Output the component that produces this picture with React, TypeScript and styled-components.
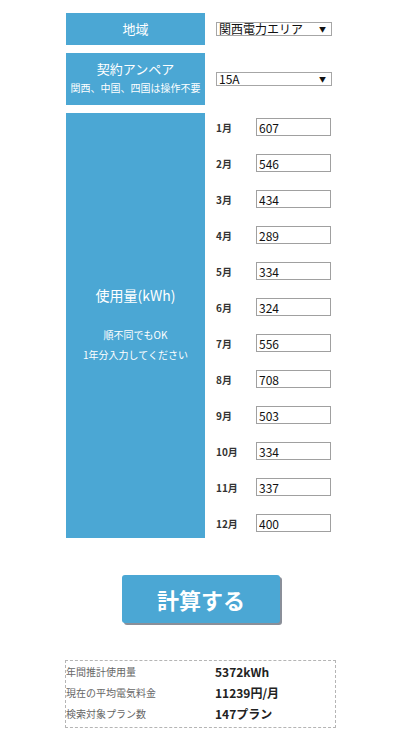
import React from 'react';
import styled, { createGlobalStyle } from 'styled-components';

const GlobalStyle = createGlobalStyle`
  html, body {
    margin: 0;
    padding: 0;
    background: #fff;
    font-family: "Noto Sans CJK JP", "Noto Sans", sans-serif;
    color: #222;
  }
`;

const months = [607, 546, 434, 289, 334, 324, 556, 708, 503, 334, 337, 400];

const Page = styled.div`
  width: 271px;
  margin: 0 0 0 65px;
  padding: 13px 0 11px;
`;

const FormGrid = styled.div`
  display: grid;
  grid-template-columns: 139px 1fr;
  column-gap: 11px;
  row-gap: 8px;
  padding-left: 1px;
`;

const Label = styled.div<{ $h?: number }>`
  background: #4ba7d4;
  color: #fff;
  display: flex;
  flex-direction: column;
  align-items: center;
  justify-content: center;
  text-align: center;
  min-height: ${(p) => p.$h ?? 0}px;
`;

const LabelTitle = styled.div<{ $size: number }>`
  font-size: ${(p) => p.$size}px;
  line-height: 1.4;
`;

const LabelNote = styled.div`
  font-size: 10px;
  line-height: 20px;
`;

const Field = styled.div`
  display: flex;
  align-items: center;
`;

const SelectBox = styled.div`
  position: relative;
  width: 116px;
  height: 14px;
  border: 1px solid #a6a6a6;
  box-sizing: border-box;
  background: #fff;
  font-size: 12px;
  line-height: 12px;
  padding-left: 2px;
  color: #111;
  display: flex;
  align-items: center;
`;

const Arrow = styled.span`
  position: absolute;
  right: 5px;
  top: 2px;
  font-size: 7px;
  line-height: 9px;
  color: #111;
`;

const MonthList = styled.div`
  display: flex;
  flex-direction: column;
  gap: 18px;
  padding: 5px 0 6px;
`;

const MonthRow = styled.div`
  display: flex;
  align-items: center;
  height: 18px;
`;

const MonthName = styled.span`
  width: 40px;
  font-size: 10px;
  font-weight: bold;
  color: #333;
`;

const NumInput = styled.input`
  width: 75px;
  height: 18px;
  box-sizing: border-box;
  border: 1px solid #a0a0a0;
  padding: 0 2px;
  font-family: "Noto Sans CJK JP", "Noto Sans", sans-serif;
  font-size: 12px;
  color: #111;
  outline: none;
`;

const ButtonRow = styled.div`
  display: flex;
  justify-content: center;
  padding: 37px 0 37px 1px;
`;

const CalcButton = styled.button`
  width: 158px;
  height: 48px;
  border: none;
  border-radius: 3px;
  background: #4ba7d4;
  box-shadow: 2px 2px 0 #8a8f99;
  color: #fff;
  font-family: "Noto Sans CJK JP", "Noto Sans", sans-serif;
  font-size: 22px;
  font-weight: bold;
  cursor: pointer;
`;

const Summary = styled.div`
  border: 1px dashed #b5b5b5;
  padding: 0 0 3px;
`;

const SummaryRow = styled.div`
  display: flex;
  align-items: center;
  height: 21px;
`;

const SummaryKey = styled.span`
  width: 149px;
  font-size: 10px;
  color: #666;
`;

const SummaryValue = styled.span`
  font-size: 12px;
  font-weight: bold;
  color: #222;
`;

export default function App() {
  return (
    <Page>
      <GlobalStyle />
      <FormGrid>
        <Label $h={32}>
          <LabelTitle $size={13}>地域</LabelTitle>
        </Label>
        <Field>
          <SelectBox>
            関西電力エリア
            <Arrow>▼</Arrow>
          </SelectBox>
        </Field>

        <Label $h={52}>
          <LabelTitle $size={13}>契約アンペア</LabelTitle>
          <LabelNote>関西、中国、四国は操作不要</LabelNote>
        </Label>
        <Field>
          <SelectBox>
            15A
            <Arrow>▼</Arrow>
          </SelectBox>
        </Field>

        <Label>
          <LabelTitle $size={14}>使用量(kWh)</LabelTitle>
          <LabelNote style={{ marginTop: 20 }}>順不同でもOK</LabelNote>
          <LabelNote>1年分入力してください</LabelNote>
        </Label>
        <MonthList>
          {months.map((v, i) => (
            <MonthRow key={i}>
              <MonthName>{i + 1}月</MonthName>
              <NumInput defaultValue={v} />
            </MonthRow>
          ))}
        </MonthList>
      </FormGrid>

      <ButtonRow>
        <CalcButton>計算する</CalcButton>
      </ButtonRow>

      <Summary>
        <SummaryRow>
          <SummaryKey>年間推計使用量</SummaryKey>
          <SummaryValue>5372kWh</SummaryValue>
        </SummaryRow>
        <SummaryRow>
          <SummaryKey>現在の平均電気料金</SummaryKey>
          <SummaryValue>11239円/月</SummaryValue>
        </SummaryRow>
        <SummaryRow>
          <SummaryKey>検索対象プラン数</SummaryKey>
          <SummaryValue>147プラン</SummaryValue>
        </SummaryRow>
      </Summary>
    </Page>
  );
}
